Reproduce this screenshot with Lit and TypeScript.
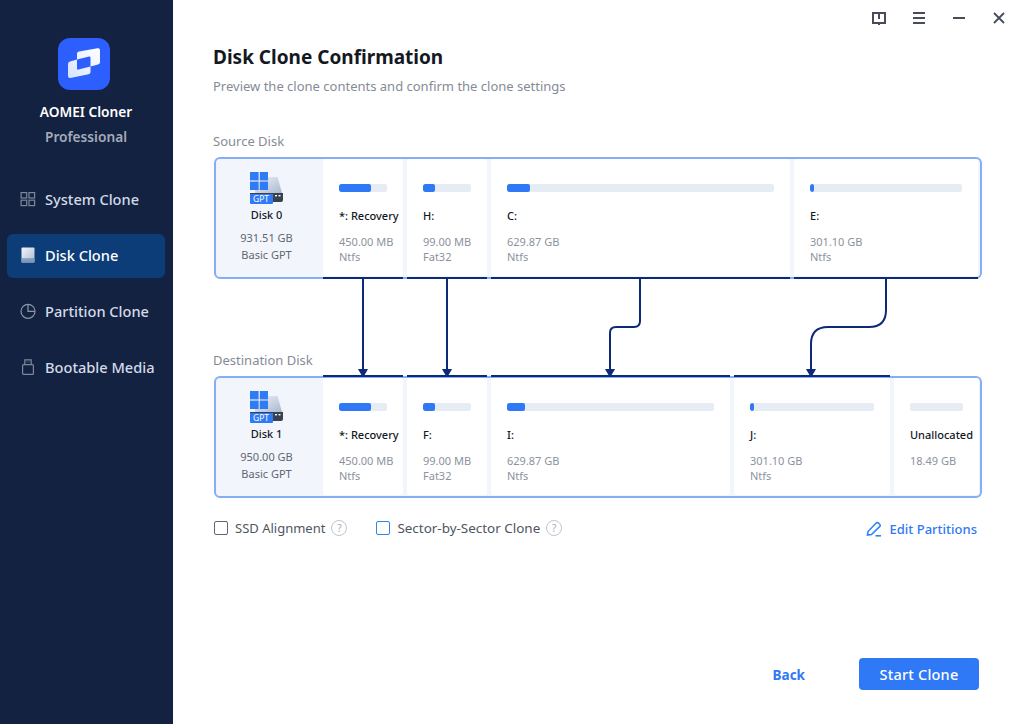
import { LitElement, html, css, svg, nothing, type TemplateResult } from 'lit';
import { customElement } from 'lit/decorators.js';

interface Part {
  name: string;
  size: string;
  fs?: string;
  width: number;
  fill: number;
  linked: boolean;
}

const SOURCE: Part[] = [
  { name: '*: Recovery', size: '450.00 MB', fs: 'Ntfs', width: 80, fill: 32, linked: true },
  { name: 'H:', size: '99.00 MB', fs: 'Fat32', width: 80, fill: 12, linked: true },
  { name: 'C:', size: '629.87 GB', fs: 'Ntfs', width: 299, fill: 23, linked: true },
  { name: 'E:', size: '301.10 GB', fs: 'Ntfs', width: 184, fill: 4, linked: true },
];

const DEST: Part[] = [
  { name: '*: Recovery', size: '450.00 MB', fs: 'Ntfs', width: 80, fill: 32, linked: true },
  { name: 'F:', size: '99.00 MB', fs: 'Fat32', width: 80, fill: 12, linked: true },
  { name: 'I:', size: '629.87 GB', fs: 'Ntfs', width: 239, fill: 18, linked: true },
  { name: 'J:', size: '301.10 GB', fs: 'Ntfs', width: 156, fill: 4, linked: true },
  { name: 'Unallocated', size: '18.49 GB', width: 85, fill: 0, linked: false },
];

const NAV = [
  { label: 'System Clone', icon: 'grid' },
  { label: 'Disk Clone', icon: 'disk', active: true },
  { label: 'Partition Clone', icon: 'pie' },
  { label: 'Bootable Media', icon: 'usb' },
];

const navIcon = (name: string): TemplateResult => {
  if (name === 'grid') {
    return html`<svg width="16" height="16" viewBox="0 0 16 16" fill="none" stroke="#7d879b" stroke-width="1.2">
      <rect x="1.1" y="1.6" width="5.6" height="5.4" />
      <rect x="9" y="1.6" width="5.6" height="5.4" />
      <rect x="1.1" y="9.2" width="5.6" height="5.4" />
      <rect x="9" y="9.2" width="5.6" height="5.4" />
    </svg>`;
  }
  if (name === 'disk') {
    return html`<svg width="16" height="16" viewBox="0 0 16 16">
      <defs>
        <linearGradient id="dg" x1="0" y1="0" x2="1" y2="1">
          <stop offset="0" stop-color="#f4f7fb" />
          <stop offset="1" stop-color="#a9b8cf" />
        </linearGradient>
      </defs>
      <rect x="1.5" y="0.5" width="13" height="15" rx="1" fill="url(#dg)" />
      <rect x="1.5" y="11.5" width="13" height="1" fill="#5f7ba3" />
      <rect x="1.5" y="12.5" width="13" height="3" fill="#7f97bb" />
    </svg>`;
  }
  if (name === 'pie') {
    return html`<svg width="16" height="16" viewBox="0 0 16 16" fill="none" stroke="#8d96a8" stroke-width="1.2">
      <circle cx="8" cy="8.3" r="7" />
      <path d="M8 1.3V8.3H15" />
    </svg>`;
  }
  return html`<svg width="16" height="16" viewBox="0 0 16 16" fill="none" stroke="#7d879b" stroke-width="1.2">
    <rect x="2.6" y="5.6" width="10.8" height="9.8" rx="1" />
    <path d="M4.8 5.6V0.8H11.2V5.6M6.6 3H7.4M8.8 3H9.6" />
  </svg>`;
};

const diskIcon = (): TemplateResult => html`<svg width="34" height="34" viewBox="0 0 34 34">
  <defs>
    <linearGradient id="hdd" x1="0" y1="0" x2="1" y2="1">
      <stop offset="0" stop-color="#eef2f8" />
      <stop offset="1" stop-color="#aab8cf" />
    </linearGradient>
  </defs>
  <path d="M5 5H27.5L32 21H5Z" fill="url(#hdd)" />
  <path d="M0 21H33V28Q33 30 31 30H0Z" fill="#3a414e" />
  <rect x="25" y="23" width="2" height="1.4" fill="#fff" />
  <rect x="28.5" y="23" width="2" height="1.4" fill="#fff" />
  <g fill="#2f7bf6">
    <rect x="0" y="0" width="8.6" height="8.4" />
    <rect x="9.8" y="0" width="8.2" height="8.4" />
    <rect x="0" y="9.6" width="8.6" height="8.4" />
    <rect x="9.8" y="9.6" width="8.2" height="8.4" />
  </g>
</svg>`;

@customElement('disk-panel')
export class DiskPanel extends LitElement {
  static properties = {
    name: {},
    size: {},
    parts: { attribute: false },
    edge: {},
  };

  name = '';
  size = '';
  parts: Part[] = [];
  edge: 'top' | 'bottom' = 'bottom';

  static styles = css`
    :host {
      display: block;
    }
    .panel {
      display: flex;
      gap: 4px;
      height: 122px;
      box-sizing: border-box;
      border: 2px solid #84aef6;
      border-radius: 6px;
      background: #f2f5fb;
      padding-right: 1px;
    }
    .info {
      width: 107px;
      flex: none;
      margin-right: -4px;
      display: flex;
      flex-direction: column;
      align-items: center;
      font-size: 11px;
      color: #5f6673;
      line-height: 17px;
      padding: 13px 6px 0 0;
      box-sizing: border-box;
    }
    .icon {
      position: relative;
      width: 34px;
      height: 34px;
    }
    .gpt {
      position: absolute;
      left: 0;
      top: 22px;
      width: 23px;
      height: 10px;
      background: #2f7bf6;
      color: #fff;
      font-size: 8.5px;
      line-height: 10px;
      text-align: center;
      border-radius: 0 0 1px 1px;
    }
    .info b {
      font-weight: 500;
      line-height: 16px;
      color: #14181f;
      margin: 1px 0 6px;
    }
    .part {
      flex: none;
      box-sizing: border-box;
      background: #fff;
      border-radius: 3px;
      padding: 25px 0 0 16px;
      margin-bottom: 1px;
      position: relative;
      font-size: 11px;
      color: #8b929e;
      line-height: 15px;
      white-space: nowrap;
    }
    .part.linked::after {
      content: '';
      position: absolute;
      left: 0;
      right: 0;
      height: 2px;
      background: #0c2a78;
    }
    .bottom .part.linked::after {
      bottom: -3px;
    }
    .top .part.linked::after {
      top: -3px;
    }
    .bar {
      height: 8px;
      margin-right: 16px;
      background: #e6ecf4;
      border-radius: 2px;
      overflow: hidden;
    }
    .bar i {
      display: block;
      height: 100%;
      background: #2f78f6;
      border-radius: 2px;
    }
    .name {
      color: #14181f;
      line-height: 16px;
      margin: 16px 0 10px;
      font-weight: 500;
    }
  `;

  render(): TemplateResult {
    return html`<div class="panel ${this.edge}">
      <div class="info">
        <div class="icon">${diskIcon()}<span class="gpt">GPT</span></div>
        <b>${this.name}</b>
        <span>${this.size}</span>
        <span>Basic GPT</span>
      </div>
      ${this.parts.map(
        (p) => html`<div class="part ${p.linked ? 'linked' : ''}" style="width:${p.width}px">
          <div class="bar"><i style="width:${p.fill}px"></i></div>
          <div class="name">${p.name}</div>
          <div>${p.size}</div>
          ${p.fs ? html`<div>${p.fs}</div>` : nothing}
        </div>`,
      )}
    </div>`;
  }
}

@customElement('app-root')
export class AppRoot extends LitElement {
  static styles = css`
    :host {
      display: flex;
      width: 1020px;
      height: 724px;
      overflow: hidden;
      background: #fff;
      font-family: 'Noto Sans', sans-serif;
    }
    aside {
      width: 173px;
      flex: none;
      background: #132240;
      padding: 38px 8px 0 7px;
      box-sizing: border-box;
      display: flex;
      flex-direction: column;
    }
    .logo {
      align-self: center;
      width: 52px;
      height: 52px;
      margin-right: 4px;
      border-radius: 12px;
      background: #2d5fff;
      display: flex;
      align-items: center;
      justify-content: center;
    }
    .product {
      text-align: center;
      color: #fff;
      font-size: 13.7px;
      font-weight: 600;
      line-height: 18px;
      margin-top: 13px;
    }
    .edition {
      text-align: center;
      color: #a3abbb;
      font-size: 13.7px;
      font-weight: 600;
      line-height: 18px;
      margin-top: 7px;
    }
    nav {
      display: flex;
      flex-direction: column;
      gap: 12px;
      margin-top: 32px;
    }
    .item {
      height: 44px;
      box-sizing: border-box;
      padding: 0 0 2px 13px;
      display: flex;
      align-items: center;
      gap: 9px;
      border-radius: 6px;
      font-size: 14.6px;
      font-weight: 500;
      color: #d3dae8;
    }
    .item.active {
      background: #0c3d78;
      color: #fff;
    }
    main {
      flex: 1;
      min-width: 0;
      padding: 0 38px 0 41px;
      display: flex;
      flex-direction: column;
    }
    .titlebar {
      height: 36px;
      margin-right: -38px;
      padding-right: 14px;
      display: flex;
      justify-content: flex-end;
      align-items: center;
      gap: 26px;
    }
    h1 {
      margin: 8px 0 0 -1px;
      font-size: 19px;
      font-weight: 700;
      line-height: 26px;
      color: #14181f;
    }
    .sub,
    .label {
      margin-left: -1px;
      font-size: 13px;
      line-height: 18px;
      color: #858b96;
    }
    .sub {
      margin-top: 7px;
    }
    .label {
      margin-top: 37px;
      margin-bottom: 7px;
    }
    .links {
      display: block;
      height: 97px;
      overflow: visible;
    }
    .label.dest {
      margin-top: -25px;
      position: relative;
    }
    .options {
      display: flex;
      align-items: center;
      margin-top: 20px;
      height: 20px;
      font-size: 13px;
      color: #4f5661;
    }
    .check {
      width: 14px;
      height: 14px;
      box-sizing: border-box;
      border: 1.5px solid #5f6673;
      border-radius: 2px;
      margin-right: 7px;
    }
    .check.blue {
      border-color: #2f85f5;
    }
    .wide {
      font-size: 13.45px;
    }
    .help {
      width: 16px;
      height: 16px;
      box-sizing: border-box;
      border: 1px solid #bfc5d0;
      border-radius: 50%;
      margin-left: 6px;
      margin-right: 29px;
      font-size: 10px;
      line-height: 14px;
      text-align: center;
      color: #a5acb8;
    }
    .edit {
      margin-left: auto;
      margin-right: 5px;
      padding-top: 2px;
      display: flex;
      align-items: center;
      gap: 8px;
      color: #2f78f6;
      font-weight: 500;
    }
    .actions {
      margin-top: auto;
      margin-bottom: 34px;
      display: flex;
      align-items: center;
      justify-content: flex-end;
      gap: 54px;
      margin-right: 3px;
    }
    .back {
      color: #2f78f6;
      font-size: 13.5px;
      font-weight: 700;
      padding-top: 2px;
    }
    .start {
      width: 120px;
      height: 32px;
      border-radius: 4px;
      background: #2f78f6;
      color: #fff;
      font-size: 14.5px;
      letter-spacing: 0.2px;
      font-weight: 500;
      display: flex;
      align-items: center;
      justify-content: center;
    }
  `;

  private _renderLinks(): TemplateResult {
    const arrow = (x: number) => svg`<path d="M${x - 5} 90H${x + 5}L${x + 1} 97H${x - 1}Z" fill="#0c2a78" />`;
    return html`<svg class="links" width="768" height="97" viewBox="0 0 768 97" fill="none">
      <g stroke="#0c2a78" stroke-width="2">
        <path d="M149 0V92" />
        <path d="M233 0V92" />
        <path d="M426 0V42Q426 48 420 48H402Q396 48 396 54V92" />
        <path d="M672 0V31Q672 48 655 48H614Q597 48 597 65V92" />
      </g>
      ${arrow(149)} ${arrow(233)} ${arrow(396)} ${arrow(597)}
    </svg>`;
  }

  render(): TemplateResult {
    return html`
      <aside>
        <div class="logo">
          <svg width="36" height="36" viewBox="0 0 36 36">
            <defs>
              <linearGradient id="lg" x1="0" y1="1" x2="1" y2="0">
                <stop offset="0" stop-color="#d7e3ff" />
                <stop offset="1" stop-color="#ffffff" />
              </linearGradient>
            </defs>
            <path
              fill="url(#lg)"
              fill-rule="evenodd"
              d="M13 5.6L31.5 2.2Q34 1.8 34 4.3V16Q34 18 32 18.5L24.5 20.5V26Q24.5 27.8 22.5 28.2L4.5 32Q2 32.4 2 30V18Q2 16 4 15.5L11 13.6V7.6Q11 6 13 5.6ZM11 13.6L23 10.6Q24.5 10.4 24.5 12V20.5L12.5 23.6Q11 24 11 22.4Z"
            />
          </svg>
        </div>
        <div class="product">AOMEI Cloner</div>
        <div class="edition">Professional</div>
        <nav>
          ${NAV.map(
            (n) => html`<div class="item ${n.active ? 'active' : ''}">${navIcon(n.icon)}<span>${n.label}</span></div>`,
          )}
        </nav>
      </aside>
      <main>
        <div class="titlebar">
          <svg width="14" height="14" viewBox="0 0 14 14" fill="none" stroke="#474c58" stroke-width="2">
            <path d="M1 2H13V12H1Z" />
            <path d="M7 1V8M7 12.5V14" />
          </svg>
          <svg width="14" height="12" viewBox="0 0 14 12" stroke="#474c58" stroke-width="2">
            <path d="M1 1H13M1 6H13M1 11H13" />
          </svg>
          <svg width="14" height="12" viewBox="0 0 14 12" stroke="#474c58" stroke-width="2">
            <path d="M1 6H13" />
          </svg>
          <svg width="14" height="12" viewBox="0 0 14 12" stroke="#474c58" stroke-width="1.8">
            <path d="M2 1L12 11M12 1L2 11" />
          </svg>
        </div>
        <h1>Disk Clone Confirmation</h1>
        <div class="sub">Preview the clone contents and confirm the clone settings</div>
        <div class="label">Source Disk</div>
        <disk-panel name="Disk 0" size="931.51 GB" edge="bottom" .parts=${SOURCE}></disk-panel>
        ${this._renderLinks()}
        <div class="label dest">Destination Disk</div>
        <disk-panel name="Disk 1" size="950.00 GB" edge="top" .parts=${DEST}></disk-panel>
        <div class="options">
          <span class="check"></span>SSD Alignment<span class="help">?</span>
          <span class="check blue"></span><span class="wide">Sector-by-Sector Clone</span><span class="help">?</span>
          <span class="edit">
            <svg width="16" height="16" viewBox="0 0 16 16" fill="none" stroke="#2f85f5" stroke-width="1.6">
              <path d="M1.5 14L2 10.5L10 2.2Q11.2 1 12.6 2.2L13.6 3.2Q14.8 4.4 13.6 5.6L5.5 13.6Z" />
              <path d="M9.5 14.8H15" />
            </svg>
            Edit Partitions
          </span>
        </div>
        <div class="actions">
          <span class="back">Back</span>
          <span class="start">Start Clone</span>
        </div>
      </main>
    `;
  }
}
